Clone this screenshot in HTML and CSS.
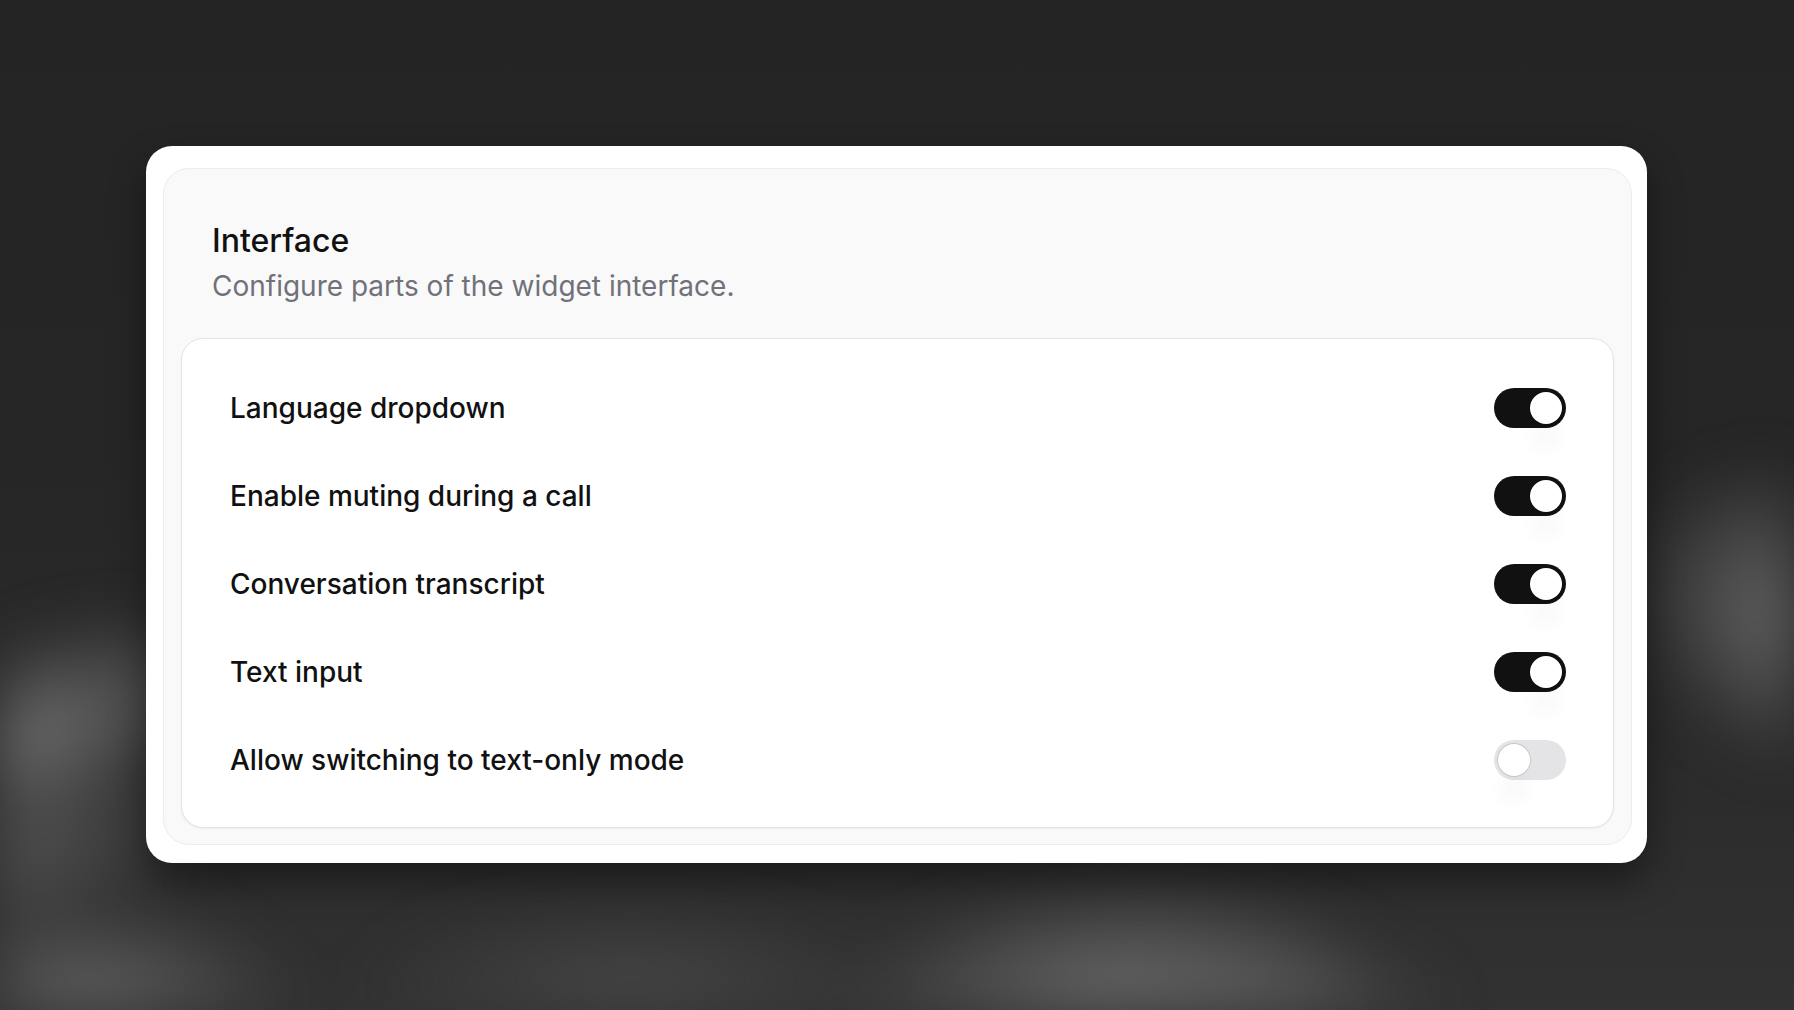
FILE: index.html
```html
<!DOCTYPE html>
<html lang="en">
<head>
<meta charset="utf-8">
<title>Interface settings</title>
<link rel="stylesheet" href="styles.css">
</head>
<body>
<div class="backdrop">
  <span class="blob blob-left"></span>
  <span class="blob blob-left2"></span>
  <span class="blob blob-right"></span>
  <span class="blob blob-bottom"></span>
  <span class="blob blob-bottom3"></span>
  <span class="blob blob-bottom2"></span>
  <span class="blob blob-corner"></span>
</div>
<main class="stage">
  <div class="frame">
    <section class="panel">
      <header class="panel-head">
        <h2 class="panel-title">Interface</h2>
        <p class="panel-desc">Configure parts of the widget interface.</p>
      </header>
      <div class="options">
        <div class="option">
          <span class="option-label">Language dropdown</span>
          <span class="switch on"><span class="knob"></span></span>
        </div>
        <div class="option">
          <span class="option-label">Enable muting during a call</span>
          <span class="switch on"><span class="knob"></span></span>
        </div>
        <div class="option">
          <span class="option-label">Conversation transcript</span>
          <span class="switch on"><span class="knob"></span></span>
        </div>
        <div class="option">
          <span class="option-label">Text input</span>
          <span class="switch on"><span class="knob"></span></span>
        </div>
        <div class="option">
          <span class="option-label">Allow switching to text-only mode</span>
          <span class="switch off"><span class="knob"></span></span>
        </div>
      </div>
    </section>
  </div>
</main>
</body>
</html>
```

FILE: styles.css
```css
* { box-sizing: border-box; }

html, body {
  margin: 0;
  padding: 0;
  width: 100%;
  height: 100%;
  overflow: hidden;
}

body {
  background: linear-gradient(180deg, #242424 0%, #262626 45%, #2c2c2c 80%, #323232 100%);
  font-family: Inter, "Noto Sans", "Liberation Sans", sans-serif;
  color: #111111;
  position: relative;
}

.backdrop {
  position: absolute;
  inset: 0;
  overflow: hidden;
  filter: blur(28px);
}

.blob {
  position: absolute;
  display: block;
  border-radius: 50%;
}

.blob-left {
  left: -220px;
  top: 640px;
  width: 480px;
  height: 200px;
  background: radial-gradient(closest-side, rgba(125,125,125,0.85), rgba(125,125,125,0));
  transform: rotate(-22deg);
}

.blob-left2 {
  left: -200px;
  top: 780px;
  width: 420px;
  height: 160px;
  background: radial-gradient(closest-side, rgba(100,100,100,0.7), rgba(100,100,100,0));
  transform: rotate(-15deg);
}

.blob-right {
  left: 1620px;
  top: 470px;
  width: 380px;
  height: 300px;
  background: radial-gradient(closest-side, rgba(125,125,125,0.85), rgba(125,125,125,0));
  transform: rotate(30deg);
}

.blob-bottom {
  left: 820px;
  top: 880px;
  width: 560px;
  height: 260px;
  background: radial-gradient(closest-side, rgba(120,120,120,0.9), rgba(120,120,120,0));
  transform: rotate(-6deg);
}

.blob-bottom3 {
  left: 1050px;
  top: 930px;
  width: 420px;
  height: 200px;
  background: radial-gradient(closest-side, rgba(110,110,110,0.8), rgba(110,110,110,0));
}

.blob-bottom2 {
  left: 350px;
  top: 900px;
  width: 560px;
  height: 200px;
  background: radial-gradient(closest-side, rgba(90,90,90,0.6), rgba(90,90,90,0));
}

.blob-corner {
  left: -120px;
  top: 900px;
  width: 420px;
  height: 220px;
  background: radial-gradient(closest-side, rgba(115,115,115,0.85), rgba(115,115,115,0));
}

.stage {
  position: relative;
  padding: 146px 147px 0 146px;
}

.frame {
  background: #ffffff;
  border-radius: 26px;
  padding: 22px 15px 18px 17px;
  box-shadow: 0 18px 36px rgba(0,0,0,0.4);
}

.panel {
  background: #f9f9f9;
  border: 1px solid #ececec;
  border-radius: 26px;
  padding: 0 17px 16px 17px;
}

.panel-head {
  padding: 52px 31px 32px 31px;
}

.panel-title {
  margin: 0;
  font-size: 32px;
  line-height: 40px;
  font-weight: 500;
  color: #111111;
}

.panel-desc {
  margin: 5px 0 0 0;
  font-size: 28px;
  line-height: 40px;
  font-weight: 400;
  color: #71717a;
}

.options {
  background: #ffffff;
  border: 1px solid #e4e4e7;
  border-radius: 22px;
  padding: 49px 47px 47px 48px;
  display: flex;
  flex-direction: column;
  gap: 48px;
  box-shadow: 0 1px 2px rgba(0,0,0,0.06);
}

.option {
  display: flex;
  align-items: center;
  justify-content: space-between;
  height: 40px;
}

.option-label {
  font-size: 28px;
  font-weight: 500;
  color: #111111;
}

.switch {
  width: 72px;
  height: 40px;
  border-radius: 20px;
  display: flex;
  align-items: center;
  padding: 4px;
  position: relative;
}

.switch.on {
  background: #111111;
  justify-content: flex-end;
}

.switch.off {
  background: #e4e4e7;
  justify-content: flex-start;
}

.knob {
  width: 32px;
  height: 32px;
  border-radius: 50%;
  background: #ffffff;
  box-shadow: 0 0 0 1px rgba(0,0,0,0.12), 0 28px 16px rgba(0,0,0,0.025);
}
```
